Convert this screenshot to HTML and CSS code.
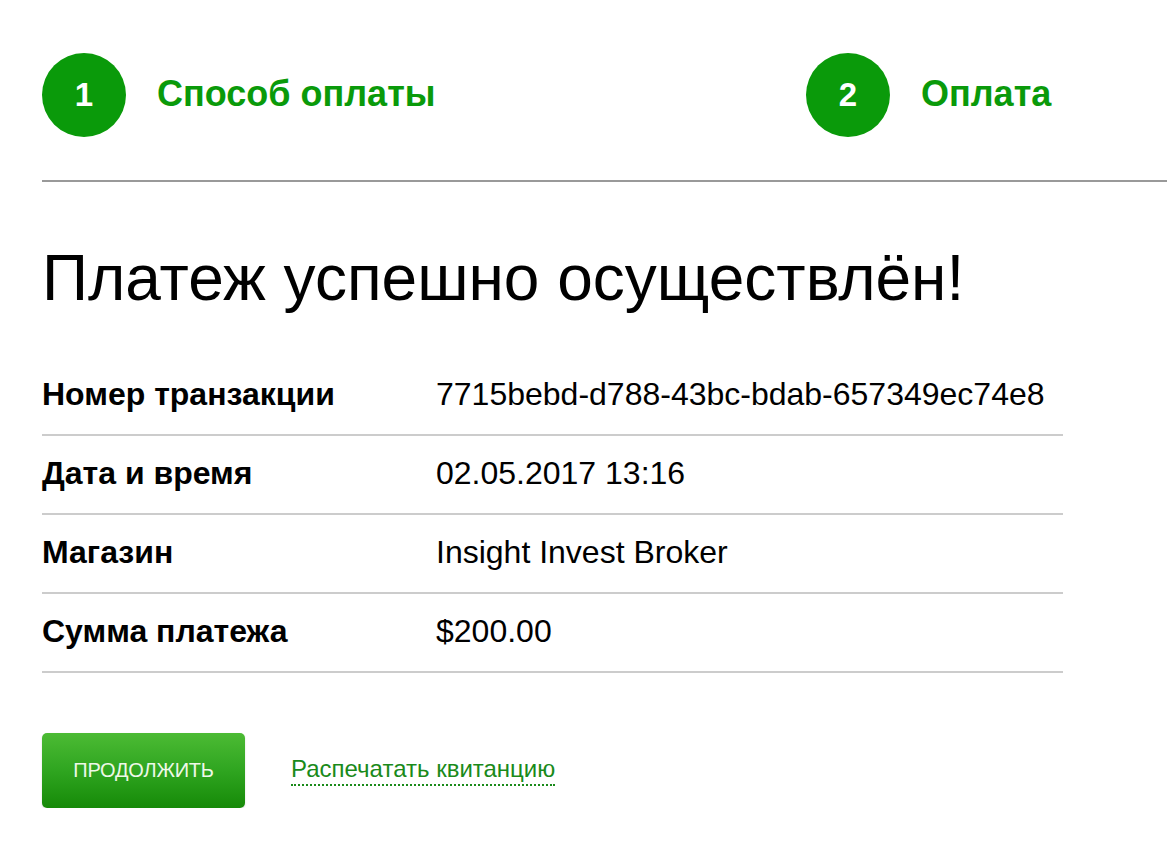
FILE: index.html
```html
<!DOCTYPE html>
<html lang="ru">
<head>
<meta charset="utf-8">
<title>Оплата</title>
<link rel="stylesheet" href="styles.css">
</head>
<body>
<div class="page">
  <div class="steps">
    <div class="step">
      <div class="step-num">1</div>
      <div class="step-title">Способ оплаты</div>
    </div>
    <div class="step">
      <div class="step-num">2</div>
      <div class="step-title">Оплата</div>
    </div>
  </div>
  <div class="divider"></div>
  <h1 class="title">Платеж успешно осуществлён!</h1>
  <div class="details">
    <div class="row"><div class="label">Номер транзакции</div><div class="value">7715bebd-d788-43bc-bdab-657349ec74e8</div></div>
    <div class="row"><div class="label">Дата и время</div><div class="value">02.05.2017 13:16</div></div>
    <div class="row"><div class="label">Магазин</div><div class="value">Insight Invest Broker</div></div>
    <div class="row"><div class="label">Сумма платежа</div><div class="value">$200.00</div></div>
  </div>
  <div class="actions">
    <button class="btn">ПРОДОЛЖИТЬ</button>
    <a class="print-link" href="#">Распечатать квитанцию</a>
  </div>
</div>
</body>
</html>
```

FILE: styles.css
```css
html, body {
  margin: 0;
  padding: 0;
  background: #fff;
}
body {
  font-family: "Liberation Sans", Arial, sans-serif;
  color: #000;
}
.page {
  padding: 53px 0 0 42px;
}
.steps {
  display: grid;
  grid-template-columns: 764px auto;
}
.step {
  display: flex;
  align-items: center;
  gap: 31px;
}
.step-num {
  width: 84px;
  height: 84px;
  border-radius: 50%;
  background: #0a9a0a;
  color: #fff;
  font-weight: bold;
  font-size: 33px;
  display: flex;
  align-items: center;
  justify-content: center;
}
.step-title {
  color: #0a9a0a;
  font-weight: bold;
  font-size: 36px;
  padding-bottom: 2px;
}
.divider {
  margin-top: 43px;
  height: 2px;
  background: #999;
}
.title {
  margin: 58px 0 0 0;
  font-size: 64px;
  font-weight: normal;
  line-height: 76px;
}
.details {
  margin-top: 41px;
  width: 1021px;
}
.row {
  display: flex;
  align-items: center;
  height: 77px;
  border-bottom: 2px solid #ccc;
}
.label {
  width: 394px;
  font-weight: bold;
  font-size: 32px;
  padding-bottom: 2px;
}
.value {
  font-size: 32px;
  padding-bottom: 2px;
}
.actions {
  margin-top: 60px;
  display: flex;
  align-items: center;
  gap: 46px;
}
.btn {
  width: 203px;
  height: 75px;
  border: none;
  border-radius: 5px;
  background: linear-gradient(to bottom, #4cbb34 0%, #2fa520 50%, #168a08 100%);
  box-shadow: 0 1px 2px rgba(0,0,0,0.15);
  color: #eef8e8;
  font-family: "Liberation Sans", Arial, sans-serif;
  font-size: 20px;
  letter-spacing: -0.2px;
  padding: 0;
}
.print-link {
  color: #1a8a1a;
  font-size: 24px;
  text-decoration: none;
  border-bottom: 2px dotted #1a8a1a;
  padding-bottom: 1px;
}
```
